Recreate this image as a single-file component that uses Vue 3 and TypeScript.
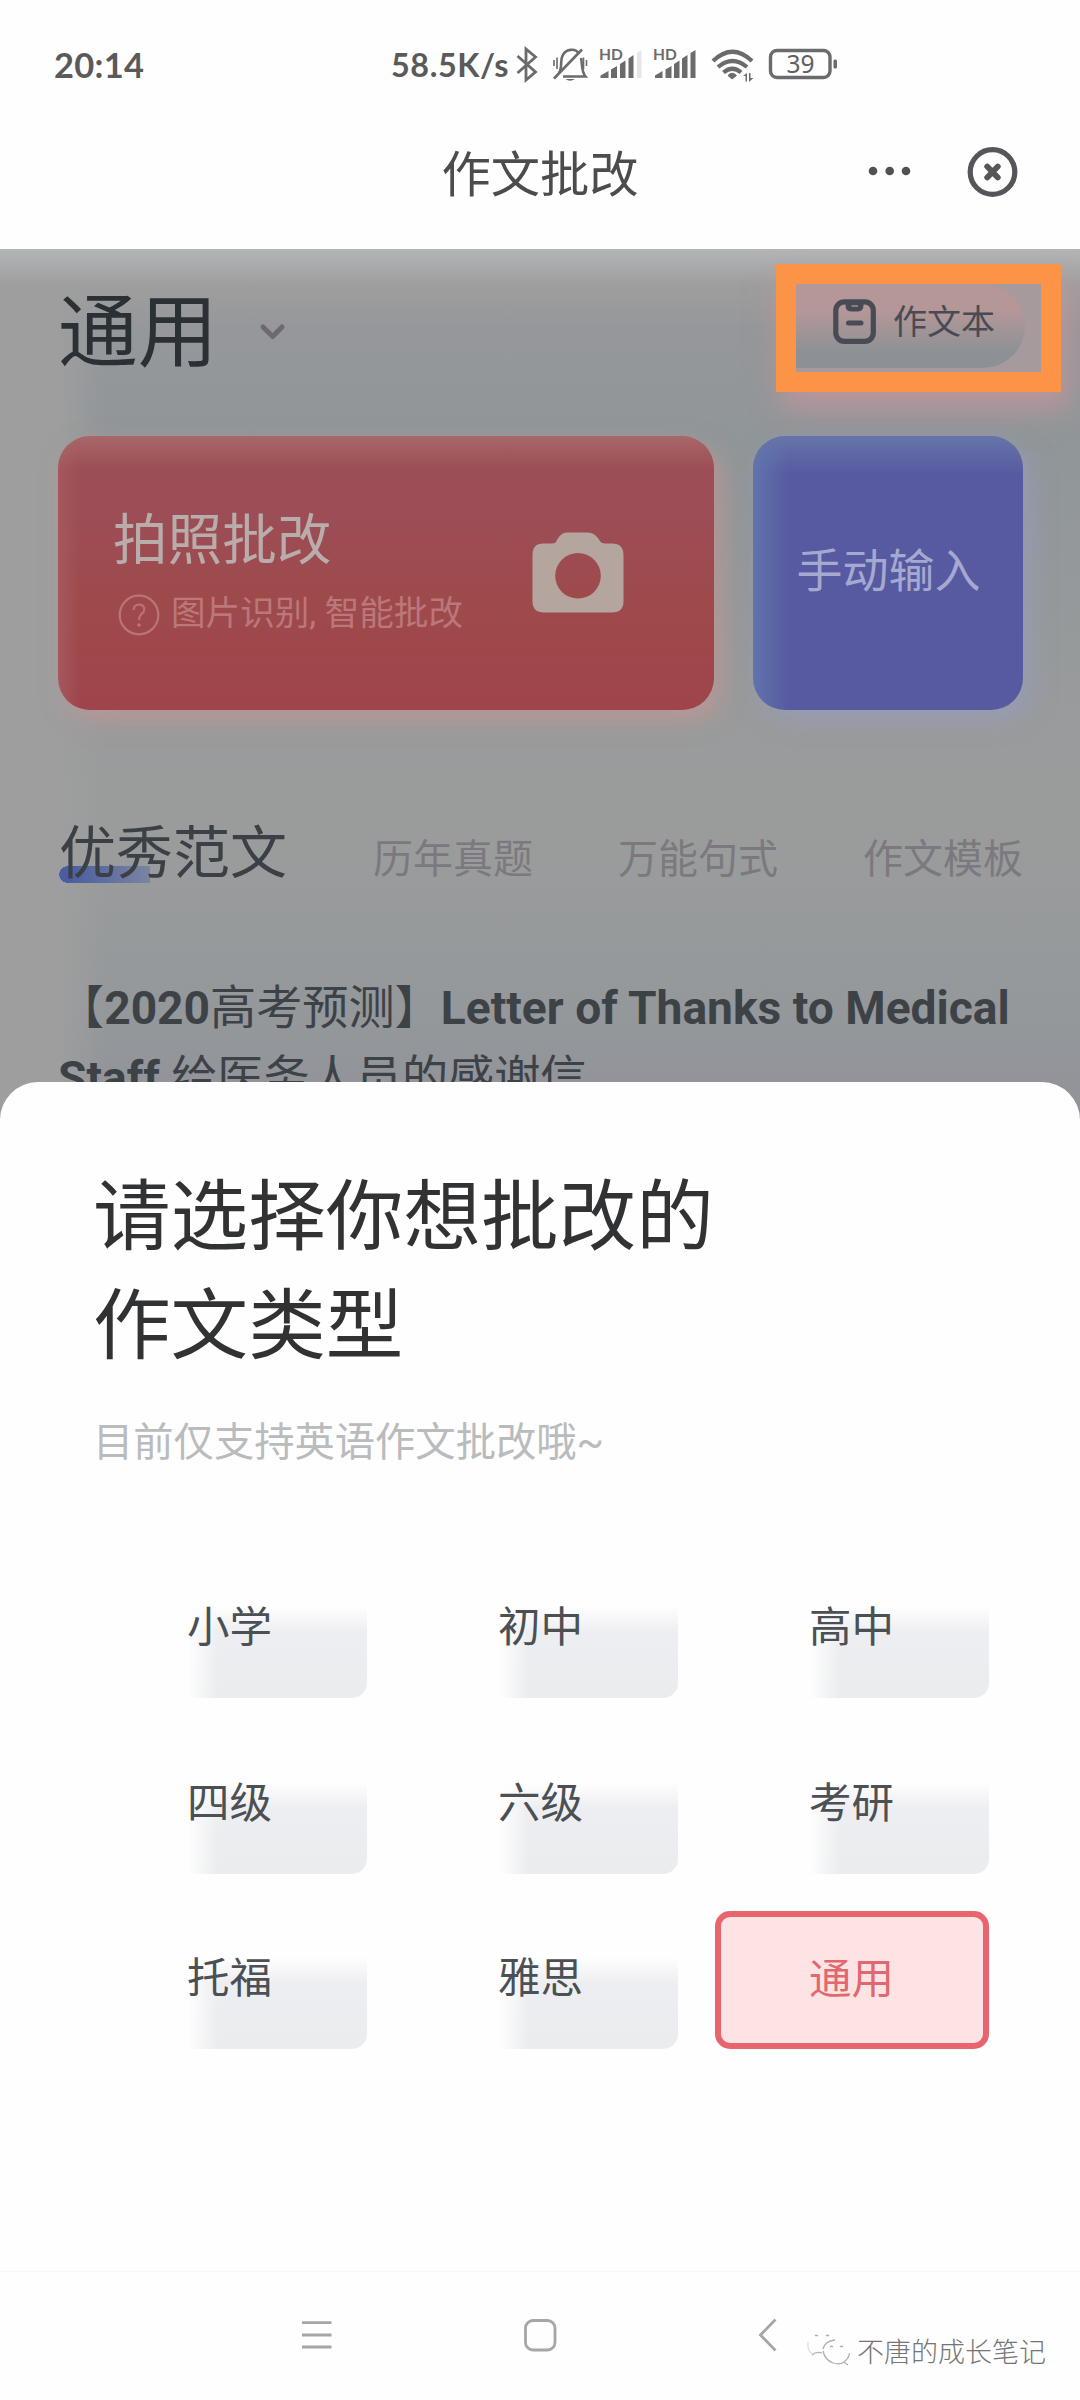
<script setup lang="ts">
import { ref } from 'vue'

const types: string[] = ['小学', '初中', '高中', '四级', '六级', '考研', '托福', '雅思', '通用']
const selected = ref<string>('通用')
const tabs: string[] = ['历年真题', '万能句式', '作文模板']
</script>

<template>
  <div class="screen">
    <div class="status">
      <span class="clock">20:14</span>
      <span class="speed">58.5K/s</span>
      <svg class="status-icons" width="328" height="60" viewBox="512 35 328 60" fill="none" stroke="#6b6b6b">
        <path d="M517.5 56 L535.5 72 L526 80 V49 L535.5 57 L517.5 73" stroke-width="2.8" />
        <g stroke-width="2.600">
          <path d="M559 73 C562 70 560.5 61 562 57 C565 48 576 48 579 54" />
          <path d="M581 58 C582.5 64 581 71 585.5 76.500 H563" />
          <path d="M554 78.500 L582 49.500" />
          <path d="M554 60 V66 M557 57.500 V69 M583.500 57.500 V69 M586.500 60 V66" stroke-width="1.6" />
          <path d="M565.500 79 H575 Q570 82.500 565.500 79Z" fill="#6b6b6b" stroke="none" />
        </g>
        <g fill="#6b6b6b" stroke="none">
          <text class="hd" x="599" y="59.500">HD</text>
          <path d="M600.500 78 V75.500 L608.500 71 V78Z M611 78 V69.500 L617 66 V78Z M620 78 V64 L625.500 60.500 V78Z M628.500 78 V58.500 L633.500 55 V78Z" />
          <path d="M637 78 V53 L641.500 50 V78Z" fill="#e6e6e6" />
          <text class="hd" x="653" y="59.500">HD</text>
          <path d="M655 78 V75.500 L662.500 71 V78Z M665.500 78 V69.500 L671.500 66 V78Z M674 78 V64 L679.500 60.500 V78Z M682 78 V58.500 L687.500 55 V78Z M690.500 78 V53 L695.500 50 V78Z" />
          <path d="M732 79 L728 75.500 Q732 71 736.500 75.500Z" stroke="#6b6b6b" stroke-width="1" />
          <path d="M743 76 L747 73 V81.500 H745.500 V76Z M749 73 H750.500 V78 H753.500 L749 82Z" />
        </g>
        <path d="M713 61 Q732.500 42.500 752 61 M718 67 Q732.500 55 747 67 M723.500 72.500 Q732.500 65 741 72.500" stroke-width="4.2" />
        <rect x="770.500" y="50.500" width="59.500" height="27" rx="6.500" stroke-width="3.400" />
        <rect x="833.500" y="59.500" width="3.500" height="9" rx="1.500" fill="#6b6b6b" stroke="none" />
        <text class="battery" x="800.500" y="72.600" text-anchor="middle" fill="#606060" stroke="none">39</text>
      </svg>
    </div>

    <header class="header">
      <h1>作文批改</h1>
      <svg width="155" height="60" viewBox="865 142 155 60">
        <g fill="#515151">
          <circle cx="873" cy="171" r="4.300" />
          <circle cx="889.700" cy="171" r="4.300" />
          <circle cx="906" cy="171" r="4.300" />
        </g>
        <g fill="none" stroke="#54565a">
          <circle cx="992.500" cy="172" r="22.300" stroke-width="5.200" />
          <path d="M987.200 166.500 L997.800 177.500 M997.800 166.500 L987.200 177.500" stroke-width="5.800" stroke-linecap="round" />
        </g>
      </svg>
    </header>

    <main class="page">
      <div class="top">
        <div class="level">
          <span>通用</span>
          <svg width="28" height="20" viewBox="0 0 28 20" fill="none" stroke="#6d6972" stroke-width="5">
            <path d="M4 5 L13.700 14.500 L23 5" stroke-linecap="round" stroke-linejoin="round" />
          </svg>
        </div>
        <div class="highlight">
          <div class="notebook">
            <svg width="44" height="46" viewBox="0 0 44 46" fill="none" stroke="#484b54">
              <rect x="2.800" y="2.800" width="37.500" height="39.500" rx="8.500" stroke-width="5.200" />
              <path d="M12.500 2.500 V6 Q12.500 12.500 18 12.500 H25 Q30.500 12.500 30.500 6 V2.500Z" fill="#484b54" stroke="none" />
              <path d="M18.500 7 H25" stroke="#9b9095" stroke-width="1.500" />
              <path d="M15.500 24 H28" stroke-width="5" stroke-linecap="round" />
            </svg>
            <span>作文本</span>
          </div>
        </div>
      </div>

      <div class="cards">
        <div class="card photo">
          <div class="photo-text">
            <div class="photo-title">拍照批改</div>
            <div class="photo-sub">
              <svg width="42" height="42" viewBox="0 0 42 42" fill="none" stroke="#ba7376">
                <circle cx="21" cy="21" r="19.300" stroke-width="2.200" />
                <path d="M15.500 16 Q16 10.500 21 10.500 Q26.500 11 26.300 15.500 Q26 18.500 23 20.500 Q21 22.500 21 26" stroke-width="2.200" />
                <circle cx="21" cy="31" r="1.800" fill="#ba7376" stroke="none" />
              </svg>
              <span>图片识别, 智能批改</span>
            </div>
          </div>
          <svg class="camera" width="92" height="82" viewBox="0 0 92 82">
            <path fill-rule="evenodd" fill="#b4a59e" d="M11 11.500 H20 C25 11.500 24 8 27 5 C30 1.500 32 .5 36 .5 H55 C59 .5 62 1.500 65 5 C68 8 68 11.500 73 11.500 H80 Q91.500 11.500 91.500 23 V69 Q91.500 80.500 80 80.500 H12 Q.5 80.500 .5 69 V23 Q.5 11.500 11 11.500Z M46 21 A22.800 22.800 0 1 0 46 66.600 A22.800 22.800 0 1 0 46 21Z" />
          </svg>
        </div>
        <div class="card manual">手动输入</div>
      </div>

      <nav class="tabs">
        <span class="active">优秀范文</span>
        <span v-for="tab in tabs" :key="tab" class="tab">{{ tab }}</span>
      </nav>

      <p class="article">【<b>2020</b>高考预测】<b>Letter of Thanks to Medical</b><br /><b>Staff</b> 给医务人员的感谢信</p>
    </main>

    <section class="sheet">
      <h2>请选择你想批改的<br />作文类型</h2>
      <p class="hint">目前仅支持英语作文批改哦~</p>
      <div class="grid">
        <button
          v-for="item in types"
          :key="item"
          class="option"
          :class="{ on: item === selected }"
          @click="selected = item"
        >{{ item }}</button>
      </div>
    </section>

    <footer class="nav">
      <svg class="nav-icons" width="490" height="40" viewBox="296 2315 490 40" fill="none" stroke="#a6a6a6" stroke-width="2.800">
        <path d="M302 2322.700 H331.500 M302 2335 H331.500 M302 2347 H331.500" />
        <rect x="525.500" y="2320.500" width="29.500" height="29.500" rx="7.500" />
        <path d="M775.500 2319.500 L760.500 2335 L775.500 2350.500" />
      </svg>
      <div class="watermark">
        <svg width="46" height="36" viewBox="0 0 46 36" fill="none" stroke="#b0b0b0" stroke-width="1.300">
          <path d="M6 21 Q1 17 2 9" stroke="#dedede" />
          <path d="M6 22 Q10 18 16 20 M9 3 Q10 1.500 12 3 M20 3 Q21.500 1.500 23 3" />
          <path d="M17 16 Q19 8 29 7 M17 18 Q19 27 27 30 Q34 32 38 29 L42 32 M38 29 Q43 25 43.500 20" />
          <path d="M24 14 Q25.500 12.500 27 14 M34 14 Q35.500 12.500 37 14" />
        </svg>
        <span>不唐的成长笔记</span>
      </div>
    </footer>
  </div>
</template>

<style>
body {
  background: #fefefe;
}
</style>

<style scoped>
.screen {
  width: 1080px;
  height: 2400px;
  overflow: hidden;
  display: flex;
  flex-direction: column;
  background: #fefefe;
  font-family: "Noto Sans CJK SC", sans-serif;
}
h1, h2, p {
  margin: 0;
  font-weight: 400;
}
.status {
  flex: none;
  height: 129px;
  display: flex;
  align-items: center;
  padding-left: 54px;
  font-family: Lato, sans-serif;
  font-weight: 700;
  color: #5a5a5a;
  white-space: nowrap;
}
.clock {
  width: 337px;
  font-size: 34.5px;
  letter-spacing: .3px;
}
.speed {
  width: 121px;
  font-size: 32.3px;
  letter-spacing: .6px;
}
.hd {
  font: 700 15.500px Lato, sans-serif;
}
.battery {
  font: 400 24.500px "Noto Sans", sans-serif;
}
.header {
  flex: none;
  height: 120px;
  display: grid;
  grid-template-columns: 1fr auto 1fr;
  padding-top: 13px;
  box-sizing: border-box;
}
.header h1 {
  grid-column: 2;
  margin-top: -1px;
  font-size: 49.3px;
  line-height: 60px;
  color: #4c4c4c;
}
.header svg {
  justify-self: end;
  margin-right: 60px;
}
.page {
  flex: none;
  height: 873px;
  box-sizing: border-box;
  overflow: hidden;
  padding: 15px 0 0 58px;
  background:
    linear-gradient(#b2b6b8, rgba(158, 158, 158, 0) 36px),
    linear-gradient(90deg, #9e9e9e 58px, rgba(158, 158, 158, 0) 105px),
    linear-gradient(#9e9e9e 36px, #95979b 80px, #909699 190px, #999b9c 470px, #9a9c9c 600px, #94989b 760px, #929499 833px);
}
.top {
  display: flex;
  justify-content: space-between;
  padding-right: 19px;
}
.level {
  display: flex;
  align-items: center;
  gap: 41px;
  height: 128px;
  font-size: 79.8px;
  line-height: 122px;
  color: #2b3034;
}
.level span {
  height: 128px;
}
.level svg {
  margin-top: 7px;
}
.highlight {
  width: 285px;
  height: 128px;
  box-sizing: border-box;
  border: 20px solid #fb9446;
  background: #a79a9d;
  box-shadow: 6px 16px 28px rgba(216, 150, 155, .6);
}
.notebook {
  display: flex;
  align-items: center;
  gap: 17px;
  height: 84px;
  width: 229px;
  box-sizing: border-box;
  padding: 0 0 8px 37px;
  border-radius: 0 42px 42px 0;
  background: linear-gradient(#b69798 25px, #8d9195 68px);
  font-size: 34px;
  line-height: 44px;
  color: #484b54;
  white-space: nowrap;
}
.notebook span {
  margin: -5px 0 0 -1px;
}
.cards {
  display: flex;
  gap: 39px;
  margin-top: 44px;
}
.card {
  height: 274px;
  box-sizing: border-box;
  border-radius: 32px;
}
.photo {
  width: 656px;
  display: flex;
  justify-content: space-between;
  padding: 69px 90px 0 55px;
  background:
    linear-gradient(#a86768, rgba(168, 103, 104, 0) 34px),
    linear-gradient(90deg, #a5585e, rgba(157, 76, 84, 0) 22px),
    linear-gradient(#9c4d55 30%, #9e4a4b 60%, #9f444b);
  box-shadow: 8px 10px 24px rgba(196, 150, 146, .7);
}
.photo-title {
  font-size: 54.6px;
  line-height: 62px;
  color: #b9adab;
}
.photo-sub {
  display: flex;
  align-items: center;
  gap: 11px;
  margin: 27px 0 0 5px;
  font-family: Roboto, "Noto Sans CJK SC", sans-serif;
  font-size: 34.6px;
  line-height: 42px;
  color: #bb7779;
  white-space: nowrap;
}
.photo-sub span {
  margin-top: -5px;
}
.camera {
  margin-top: 27px;
}
.manual {
  width: 270px;
  padding: 96px 0 0 1px;
  text-align: center;
  font-size: 46px;
  line-height: 70px;
  color: #a6a9cf;
  background:
    linear-gradient(#6575a9, rgba(101, 117, 169, 0) 38px),
    linear-gradient(90deg, #6074ac, rgba(96, 116, 172, 0) 36px),
    #575aa0;
  box-shadow: 8px 10px 24px rgba(150, 156, 190, .7);
}
.tabs {
  display: flex;
  align-items: baseline;
  margin-top: 102px;
  height: 84px;
  white-space: nowrap;
}
.active {
  flex: none;
  width: 314px;
  padding-left: 1px;
  font-size: 57px;
  line-height: 72px;
  color: #3b4046;
  background:
    radial-gradient(circle at 8.500px 8.500px, #4a5da0 8px, transparent 8.500px) no-repeat 1px 54px / 9px 17px,
    linear-gradient(90deg, #4a5da0, #7b84a0) no-repeat 10px 54px / 82px 17px;
}
.tab {
  flex: none;
  width: 245px;
  font-size: 40px;
  line-height: 60px;
  color: #7b797f;
}
.article {
  margin-top: 77px;
  width: 1000px;
  font-family: Roboto, "Noto Sans CJK SC", sans-serif;
  font-size: 46.15px;
  line-height: 70px;
  color: #3d4247;
  white-space: nowrap;
}
.sheet {
  flex: none;
  height: 1189px;
  margin-top: -40px;
  box-sizing: border-box;
  padding: 74px 91px 0 93px;
  border-radius: 38px 38px 0 0;
  background: #fefefe;
  position: relative;
}
.sheet h2 {
  font-size: 77.6px;
  line-height: 109px;
  color: #303234;
}
.hint {
  margin-top: 39px;
  font-family: Roboto, "Noto Sans CJK SC", sans-serif;
  font-size: 40.3px;
  line-height: 60px;
  color: #b9bbbd;
}
.grid {
  display: grid;
  grid-template-columns: repeat(3, 274px);
  gap: 37.500px 37px;
  margin-top: 87px;
}
.option {
  height: 138px;
  box-sizing: border-box;
  border: 0;
  border-radius: 15px;
  padding: 0 1px 10px 0;
  font-family: inherit;
  font-size: 42.5px;
  line-height: 60px;
  color: #4b5054;
  background:
    linear-gradient(#fefefe, rgba(254, 254, 254, 0) 26px) no-repeat right bottom / 179px 92px,
    linear-gradient(90deg, #fefefe, rgba(254, 254, 254, 0) 30px) no-repeat right bottom / 179px 92px,
    linear-gradient(#efeff3, #eaecee) no-repeat right bottom / 179px 92px;
}
.option.on {
  border: 6px solid #e8656f;
  padding-bottom: 9px;
  color: #e0686f;
  background: #fee3e4;
}
.nav {
  flex: none;
  height: 129px;
  box-sizing: border-box;
  border-top: 1px solid #f7f7f7;
  display: flex;
  padding-left: 296px;
}
.nav-icons {
  margin-top: 43px;
}
.watermark {
  display: flex;
  align-items: center;
  gap: 5px;
  height: 40px;
  margin: 59px 0 0 20px;
  font-size: 27px;
  font-weight: 300;
  line-height: 40px;
  color: #757575;
  white-space: nowrap;
}
</style>
